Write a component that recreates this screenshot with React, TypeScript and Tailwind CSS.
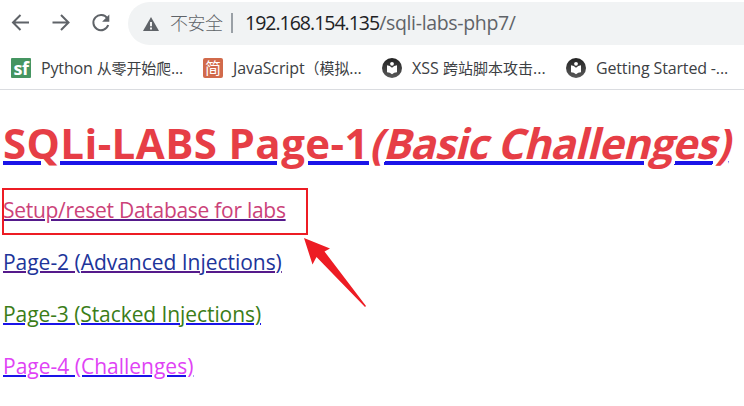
import React from 'react';

function LibraryIcon() {
  return (
    <svg width="20" height="20" viewBox="0 0 20 20" className="shrink-0">
      <defs>
        <linearGradient id="disc" x1="0" y1="0" x2="0" y2="1">
          <stop offset="0" stopColor="#222" />
          <stop offset="1" stopColor="#5a5a5a" />
        </linearGradient>
      </defs>
      <circle cx="10" cy="10" r="10" fill="url(#disc)" />
      <circle cx="10" cy="5.8" r="1.9" fill="#fff" />
      <path d="M5 7.3Q8 7.5 10 9.7Q12 7.5 15 7.3V14.3Q12 14.5 10 16.2Q8 14.5 5 14.3Z" fill="#fff" />
    </svg>
  );
}

function Toolbar() {
  return (
    <div className="flex h-[47px] items-center">
      <svg width="128" height="47" viewBox="0 0 128 47" fill="none" stroke="#5f6368" strokeWidth="2" className="shrink-0">
        <path d="M29 22.5H13.5M20.5 15L13 22.5L20.5 30" />
        <path d="M52.500 22.500H68M61 15L68.500 22.500L61 30" />
        <path d="M107.300 18.300A7.600 7.600 0 1 0 108.200 25" />
        <path d="M109.300 14.500V21.700H102.100Z" fill="#5f6368" stroke="none" />
      </svg>
      <div className="mt-[-1px] flex h-[43px] flex-1 items-center rounded-l-full bg-[#f1f3f4] pl-[15px] text-[#5f6368]">
        <svg width="16" height="14" viewBox="0 0 16 14" className="mt-[2px] shrink-0">
          <path d="M8 0L16 14H0Z" fill="#5f6368" />
          <path d="M8 5V9.300M8 10.500V12.500" stroke="#fff" strokeWidth="1.800" />
        </svg>
        <span className="ml-[11px] w-[54px] shrink-0 text-[18px] font-light tracking-[-0.5px]">不安全</span>
        <span className="ml-[7px] h-[20px] w-[2px] shrink-0 bg-[#9aa0a6]" />
        <span className="ml-[12px] text-[19.5px] tracking-[-0.34px] whitespace-nowrap"><span className="tracking-[-1px] text-[#202124]">192.168.154.135</span>/sqli-labs-php7/</span>
      </div>
    </div>
  );
}

function Bookmarks() {
  return (
    <div className="flex h-[43px] items-center border-b border-[#dadce0] pl-[11px] text-[16px] whitespace-nowrap text-[#3c4043]">
      <div className="flex w-[192px] shrink-0 items-center">
        <span className="flex size-[20px] shrink-0 items-center justify-center rounded-[1px] bg-[#459561] text-[18px] leading-[20px] font-bold tracking-[-0.5px] text-white">sf</span>
        <span className="ml-[10px] tracking-[-0.15px]">Python <span className="text-[15px]">从零开始爬</span>...</span>
      </div>
      <div className="flex w-[179px] shrink-0 items-center">
        <span className="flex size-[20px] shrink-0 items-center justify-center rounded-[2px] bg-[#d16a4b] text-[16px] leading-[20px] text-white">简</span>
        <span className="ml-[10px] tracking-[-0.1px]">JavaScript<span className="text-[15px]">（模拟</span>...</span>
      </div>
      <div className="flex w-[184px] shrink-0 items-center">
        <LibraryIcon />
        <span className="ml-[10px]">XSS <span className="text-[15px]">跨站脚本攻击</span>...</span>
      </div>
      <div className="flex shrink-0 items-center">
        <LibraryIcon />
        <span className="ml-[10px] tracking-[-0.15px]">Getting Started -...</span>
      </div>
    </div>
  );
}

export default function App() {
  return (
    <div className="relative h-[406px] w-[744px] overflow-hidden bg-white font-['Open_Sans','Noto_Sans_CJK_SC',sans-serif]">
      <Toolbar />
      <Bookmarks />
      <main className="pt-[23px] pl-[3px] whitespace-nowrap">
        <h1 className="h-[60px] text-[42px] leading-[60px] font-bold text-[#e63e46]">
          <a className="tracking-[0.4px] underline decoration-[#1a14e8] decoration-[4px] underline-offset-[2px]">SQLi-LABS Page-1<em className="inline-block origin-[0_46px] -skew-x-[14deg] tracking-[-0.85px] not-italic underline decoration-[#1a14e8] decoration-[4px] underline-offset-[2px]">(Basic Challenges)</em></a>
        </h1>
        <nav className="mt-[11px] flex flex-col items-start text-[21px] leading-[52px]">
          <a className="tracking-[-0.28px] text-[#cb4279] underline decoration-[#551a8b] decoration-[2px] underline-offset-[1px]">Setup/reset Database for labs</a>
          <a className="tracking-[-0.03px] text-[#20349a] underline decoration-[#551a8b] decoration-[2px] underline-offset-[1px]">Page-2 (Advanced Injections)</a>
          <a className="tracking-[-0.08px] text-[#3b7d18] underline decoration-[#1a14e8] decoration-[2px] underline-offset-[1px]">Page-3 (Stacked Injections)</a>
          <a className="text-[#e043f5] underline decoration-[#1a14e8] decoration-[2px] underline-offset-[1px]">Page-4 (Challenges)</a>
        </nav>
      </main>
      <div className="absolute top-[188px] left-[2px] h-[47px] w-[306px] border-2 border-[#ed1c24]" />
      <svg className="absolute top-[236px] left-[302px]" width="66" height="74" viewBox="0 0 66 74">
        <path d="M2 2L28 12.500L22.500 15.500L64 70L63 71L14.500 21L10.500 28.500Z" fill="#ed1c24" />
      </svg>
    </div>
  );
}
